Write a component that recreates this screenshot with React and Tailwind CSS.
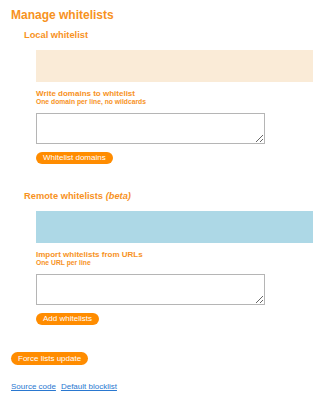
const orange = 'text-[#f7921e]'

function Section({ title, beta, boxClass, label, hint, button }) {
  return (
    <div>
      <h2 className={`ml-[13px] text-[9.3px] leading-[11px] h-[11px] font-bold ${orange}`}>
        {title} {beta && <i>(beta)</i>}
      </h2>
      <div className="ml-[25px]">
        <div className={`mt-[9px] h-[32px] w-[277px] ${boxClass}`} />
        <div className={`mt-[7px] text-[8px] leading-[9px] h-[9px] font-bold ${orange}`}>{label}</div>
        <div className={`text-[6.75px] leading-[7px] h-[7px] font-bold ${orange}`}>{hint}</div>
        <textarea className="mt-[8px] block w-[229px] h-[31px] border border-[#b5b5b5] bg-white outline-none" />
        <button className="mt-[8px] block h-[12px] rounded-full bg-[#ff8c00] px-[7px] text-[8px] leading-[12px] text-white">
          {button}
        </button>
      </div>
    </div>
  )
}

export default function App() {
  return (
    <div className="w-[330px] h-[400px] bg-white pl-[11px] font-['Liberation_Sans',Arial,sans-serif] overflow-hidden">
      <h1 className={`pt-[8px] text-[12px] leading-[14px] font-bold ${orange}`}>Manage whitelists</h1>

      <div className="mt-[8px]">
        <Section
          title="Local whitelist"
          boxClass="bg-[#faebd7]"
          label="Write domains to whitelist"
          hint="One domain per line, no wildcards"
          button="Whitelist domains"
        />
      </div>

      <div className="mt-[27px]">
        <Section
          title="Remote whitelists"
          beta
          boxClass="bg-[#add8e6]"
          label="Import whitelists from URLs"
          hint="One URL per line"
          button="Add whitelists"
        />
      </div>

      <button className="mt-[27px] block h-[13px] rounded-full bg-[#ff8c00] px-[7px] text-[8px] leading-[13px] text-white">
        Force lists update
      </button>

      <div className="mt-[17px] flex gap-[5px] text-[8px] leading-[10px] text-[#2a78d0]">
        <a href="#" className="underline">Source code</a>
        <a href="#" className="underline">Default blocklist</a>
      </div>
    </div>
  )
}
